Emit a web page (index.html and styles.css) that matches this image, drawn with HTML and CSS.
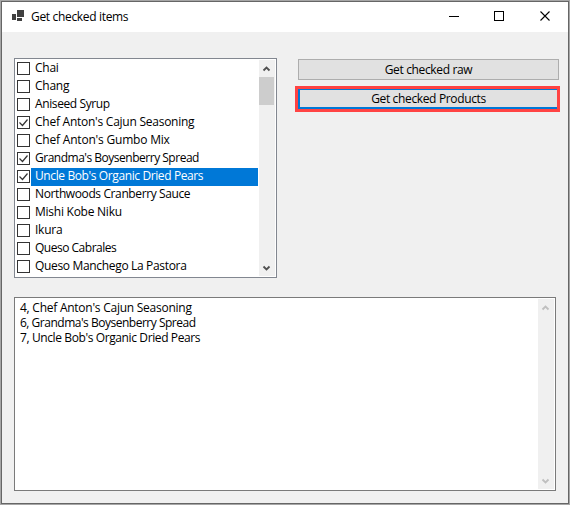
FILE: index.html
```html
<!DOCTYPE html>
<html lang="en">
<head>
<meta charset="utf-8">
<title>Get checked items</title>
<link rel="stylesheet" href="styles.css">
</head>
<body>
<div class="window">
  <header class="titlebar">
    <svg class="app-icon" width="12" height="11" viewBox="0 0 12 11" shape-rendering="crispEdges"><path fill="#404040" d="M5 0h7v7H5zM0 4h4v6H0zM5 8h5v3H5z"/></svg>
    <h1>Get checked items</h1>
    <svg class="controls" width="102" height="11" viewBox="0 0 102 11" fill="none" stroke="#000"><path d="M0 5.500h10M45.500 .5h9v9h-9z" shape-rendering="crispEdges"/><path d="M91.500 .5l9 9m0-9l-9 9" stroke-width="1.100"/></svg>
  </header>
  <main>
    <div class="top">
      <div class="list">
        <ul>
          <li><i class="box"></i><span>Chai</span></li>
          <li><i class="box"></i><span>Chang</span></li>
          <li><i class="box"></i><span class="snug">Aniseed Syrup</span></li>
          <li><i class="box"><svg viewBox="0 0 11 11"><path d="M1.500 5.500l3 3 5-6"/></svg></i><span>Chef Anton's Cajun Seasoning</span></li>
          <li><i class="box"></i><span class="loose">Chef Anton's Gumbo Mix</span></li>
          <li><i class="box"><svg viewBox="0 0 11 11"><path d="M1.500 5.500l3 3 5-6"/></svg></i><span class="tight">Grandma's Boysenberry Spread</span></li>
          <li class="selected"><i class="box"><svg viewBox="0 0 11 11"><path d="M1.500 5.500l3 3 5-6"/></svg></i><span class="snug">Uncle Bob's Organic Dried Pears</span></li>
          <li><i class="box"></i><span class="snug">Northwoods Cranberry Sauce</span></li>
          <li><i class="box"></i><span>Mishi Kobe Niku</span></li>
          <li><i class="box"></i><span>Ikura</span></li>
          <li><i class="box"></i><span class="tight">Queso Cabrales</span></li>
          <li><i class="box"></i><span class="trim">Queso Manchego La Pastora</span></li>
        </ul>
        <div class="scrollbar">
          <svg class="arrow" viewBox="0 0 7 6"><path d="M.5 4.500l3-3 3 3"/></svg>
          <div class="thumb"></div>
          <svg class="arrow down" viewBox="0 0 7 6"><path d="M.5 1.500l3 3 3-3"/></svg>
        </div>
      </div>
      <div class="buttons">
        <button class="raw">Get checked raw</button>
        <div class="highlight"><button class="products">Get checked Products</button></div>
      </div>
    </div>
    <div class="output">
      <div class="lines"><p>4, Chef Anton's Cajun Seasoning</p><p class="tight">6, Grandma's Boysenberry Spread</p><p class="snug">7, Uncle Bob's Organic Dried Pears</p></div>
      <div class="scrollbar disabled">
        <svg class="arrow" viewBox="0 0 7 6"><path d="M.5 4.500l3-3 3 3"/></svg>
        <svg class="arrow down" viewBox="0 0 7 6"><path d="M.5 1.500l3 3 3-3"/></svg>
      </div>
    </div>
  </main>
</div>
</body>
</html>
```
FILE: styles.css
```css
* { box-sizing: border-box; margin: 0; padding: 0; }
body { width: 570px; height: 505px; overflow: hidden; background: #a6a6a6; padding: 1px; font: 12px/18px "Open Sans", "Noto Sans", sans-serif; letter-spacing: -0.25px; color: #000; }
.window { width: 568px; height: 503px; border: 1px solid #666; background: #f0f0f0; }
.titlebar { height: 30px; background: #fff; display: flex; align-items: flex-start; padding: 8px 17px 0 10px; }
.titlebar h1 { flex: 1; font-size: 12px; font-weight: 400; line-height: 14px; margin-left: 7px; letter-spacing: -0.33px; }
.controls { margin-top: 1px; }
main { padding: 26px 0 0 12px; }
.top { display: flex; gap: 18px; height: 220px; }
.list { width: 263px; height: 220px; border: 1px solid #828790; background: #fff; display: flex; justify-content: space-between; padding: 1px; }
ul { list-style: none; width: 242px; padding-left: 1px; }
li { display: flex; height: 18px; align-items: flex-start; white-space: nowrap; }
.box { width: 13px; height: 13px; margin: 2px 1px 0 0; border: 1px solid #333; background: #fff; flex: none; }
.box svg { display: block; width: 11px; height: 11px; fill: none; stroke: #333; stroke-width: 1.2; }
li span { flex: 1; padding-left: 4px; line-height: 16px; height: 18px; }
.selected span { background: #0078d7; color: #fff; }
.trim { letter-spacing: -0.33px; }
.snug { letter-spacing: -0.39px; }
.tight { letter-spacing: -0.49px; }
.loose { letter-spacing: -0.2px; }
.scrollbar { width: 16px; background: #f0f0f0; display: flex; flex-direction: column; }
.arrow { width: 7px; height: 6px; margin: 6px 0 5px 4px; fill: none; stroke: #505050; stroke-width: 1.8; flex: none; overflow: visible; }
.thumb { width: 15px; height: 28px; background: #cdcdcd; }
.arrow.down { margin-top: auto; }
.disabled .arrow { stroke: #bfbfbf; }
.buttons { width: 265px; }
button { display: block; font: inherit; letter-spacing: -0.35px; color: #000; background: #e1e1e1; border: 1px solid #adadad; text-align: center; }
.raw { width: 261px; height: 21px; margin: 1px 0 6px 3px; line-height: 19px; }
.highlight { width: 265px; height: 26px; border: 3px solid #ff4343; }
.products { width: 100%; height: 20px; border: solid #0078d7; border-width: 1px 0 2px 2px; line-height: 17px; }
.output { width: 542px; height: 194px; margin-top: 19px; border: 1px solid #7a7a7a; background: #fff; display: flex; justify-content: space-between; padding: 1px; }
.lines { padding: 1px 4px; line-height: 15px; }
```
